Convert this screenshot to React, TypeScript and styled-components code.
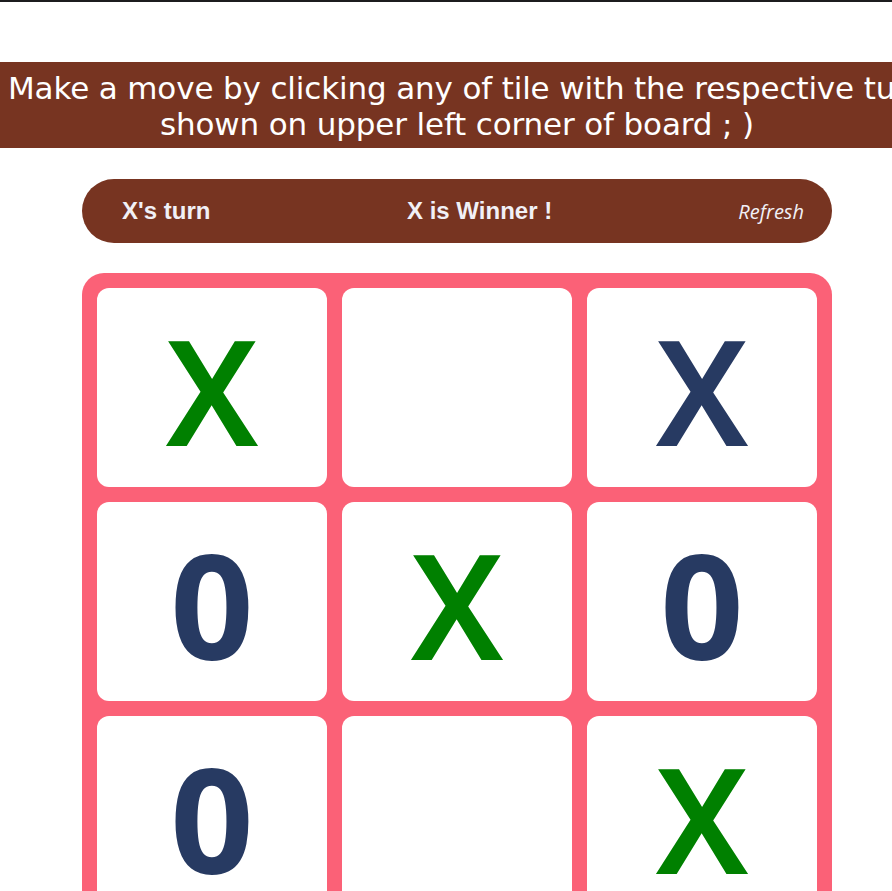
import styled, { createGlobalStyle } from 'styled-components';

const GlobalStyle = createGlobalStyle`
    html, body {
        margin: 0;
        padding: 0;
        background: #ffffff;
    }
    body {
        border-top: 2px solid #1c1c1e;
        font-family: "DejaVu Sans", Verdana, sans-serif;
    }
`

const Page = styled.div`
    width: 914px;
    padding-top: 60px;
    display: flex;
    flex-direction: column;
    align-items: center;
`

const Banner = styled.div`
    align-self: stretch;
    background-color: #773421;
    color: #ffffff;
    text-align: center;
    font-family: "DejaVu Sans", Verdana, sans-serif;
    font-size: 31px;
    letter-spacing: -0.15px;
    line-height: 36px;
    padding: 8px 8px 6px;
    white-space: nowrap;
`

const StatusBar = styled.div`
    margin-top: 31px;
    width: 750px;
    height: 64px;
    box-sizing: border-box;
    padding: 0 28px 0 40px;
    border-radius: 32px;
    background-color: #773421;
    color: #f1f0f6;
    display: flex;
    align-items: center;
    font-family: "Liberation Sans", Arial, sans-serif;
    font-size: 24px;
    font-weight: 700;
`

const Status = styled.span<{ $w: number }>`
    width: ${p => p.$w}px;
`

const Refresh = styled.button`
    margin-left: auto;
    border: none;
    background: none;
    padding: 0;
    color: #f1f0f6;
    font-family: "Open Sans", "Noto Sans", sans-serif;
    font-style: italic;
    font-weight: 400;
    font-size: 20px;
    cursor: pointer;
`

const Board = styled.div`
    margin-top: 30px;
    width: 750px;
    box-sizing: border-box;
    padding: 15px;
    border-radius: 22px;
    background-color: #fb6177;
    display: grid;
    grid-template-columns: repeat(3, 1fr);
    grid-auto-rows: 199px;
    gap: 15px;
`

const Tile = styled.button<{ $color: string; $weight: number }>`
    border: none;
    border-radius: 12px;
    background: #ffffff;
    padding: 4px 0 0;
    display: flex;
    align-items: center;
    justify-content: center;
    color: ${p => p.$color};
    font-family: "Noto Sans", "Open Sans", sans-serif;
    font-weight: ${p => p.$weight};
    font-size: 146px;
    line-height: 1;
    cursor: pointer;
`

const GREEN = '#008000';
const NAVY = '#273a62';

const tiles: { mark: string; color: string }[] = [
    { mark: 'X', color: GREEN },
    { mark: '', color: NAVY },
    { mark: 'X', color: NAVY },
    { mark: '0', color: NAVY },
    { mark: 'X', color: GREEN },
    { mark: '0', color: NAVY },
    { mark: '0', color: NAVY },
    { mark: '', color: NAVY },
    { mark: 'X', color: GREEN },
];

export default function App() {
    return <>
        <GlobalStyle />
        <Page>
            <Banner>
                Make a move by clicking any of tile with the respective turn<br />
                shown on upper left corner of board ; )
            </Banner>
            <StatusBar>
                <Status $w={285}>X's turn</Status>
                <Status $w={180}>X is Winner !</Status>
                <Refresh>Refresh</Refresh>
            </StatusBar>
            <Board>
                {tiles.map((t, i) => (
                    <Tile key={i} $color={t.color} $weight={t.mark === 'X' ? 600 : 700}>{t.mark}</Tile>
                ))}
            </Board>
        </Page>
    </>
}
